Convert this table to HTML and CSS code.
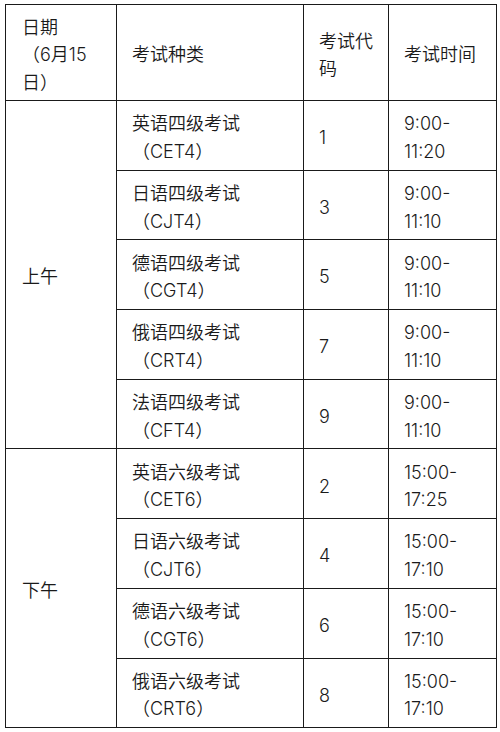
FILE: index.html
```html
<!DOCTYPE html>
<html lang="zh-CN">
<head>
<meta charset="utf-8">
<link rel="stylesheet" href="styles.css">
</head>
<body>
<table class="schedule">
  <colgroup>
    <col class="c1"><col class="c2"><col class="c3"><col class="c4">
  </colgroup>
  <thead>
    <tr class="head">
      <td class="first">日期<br>（6月15<br>日）</td>
      <td>考试种类</td>
      <td>考试代<br>码</td>
      <td>考试时间</td>
    </tr>
  </thead>
  <tbody>
    <tr><td class="first" rowspan="5">上午</td><td>英语四级考试<br>（CET4）</td><td>1</td><td>9:00-<br>11:20</td></tr>
    <tr><td>日语四级考试<br>（CJT4）</td><td>3</td><td>9:00-<br>11:10</td></tr>
    <tr><td>德语四级考试<br>（CGT4）</td><td>5</td><td>9:00-<br>11:10</td></tr>
    <tr><td>俄语四级考试<br>（CRT4）</td><td>7</td><td>9:00-<br>11:10</td></tr>
    <tr><td>法语四级考试<br>（CFT4）</td><td>9</td><td>9:00-<br>11:10</td></tr>
    <tr><td class="first" rowspan="4">下午</td><td>英语六级考试<br>（CET6）</td><td>2</td><td>15:00-<br>17:25</td></tr>
    <tr><td>日语六级考试<br>（CJT6）</td><td>4</td><td>15:00-<br>17:10</td></tr>
    <tr><td>德语六级考试<br>（CGT6）</td><td>6</td><td>15:00-<br>17:10</td></tr>
    <tr><td>俄语六级考试<br>（CRT6）</td><td>8</td><td>15:00-<br>17:10</td></tr>
  </tbody>
</table>
</body>
</html>
```
FILE: styles.css
```css
html, body {
  margin: 0;
  padding: 0;
  background: #ffffff;
}
body {
  padding: 4px 0 0 5px;
  font-family: Inter, "Noto Sans CJK SC", "Noto Sans", sans-serif;
  font-size: 18px;
  font-weight: 350;
  color: #1a1a1a;
}
.schedule {
  border-collapse: collapse;
  table-layout: fixed;
  width: 491px;
}
.c1 { width: 111px; }
.c2 { width: 187px; }
.c3 { width: 85px; }
.c4 { width: 108px; }
.schedule td {
  border: 1px solid #1a1a1a;
  padding: 5px 8px 0 15px;
  line-height: 27.5px;
  vertical-align: middle;
  text-align: left;
}
.schedule td.first {
  padding-left: 16px;
}
.head {
  height: 96px;
}
tbody tr {
  height: 69.7px;
}
```
